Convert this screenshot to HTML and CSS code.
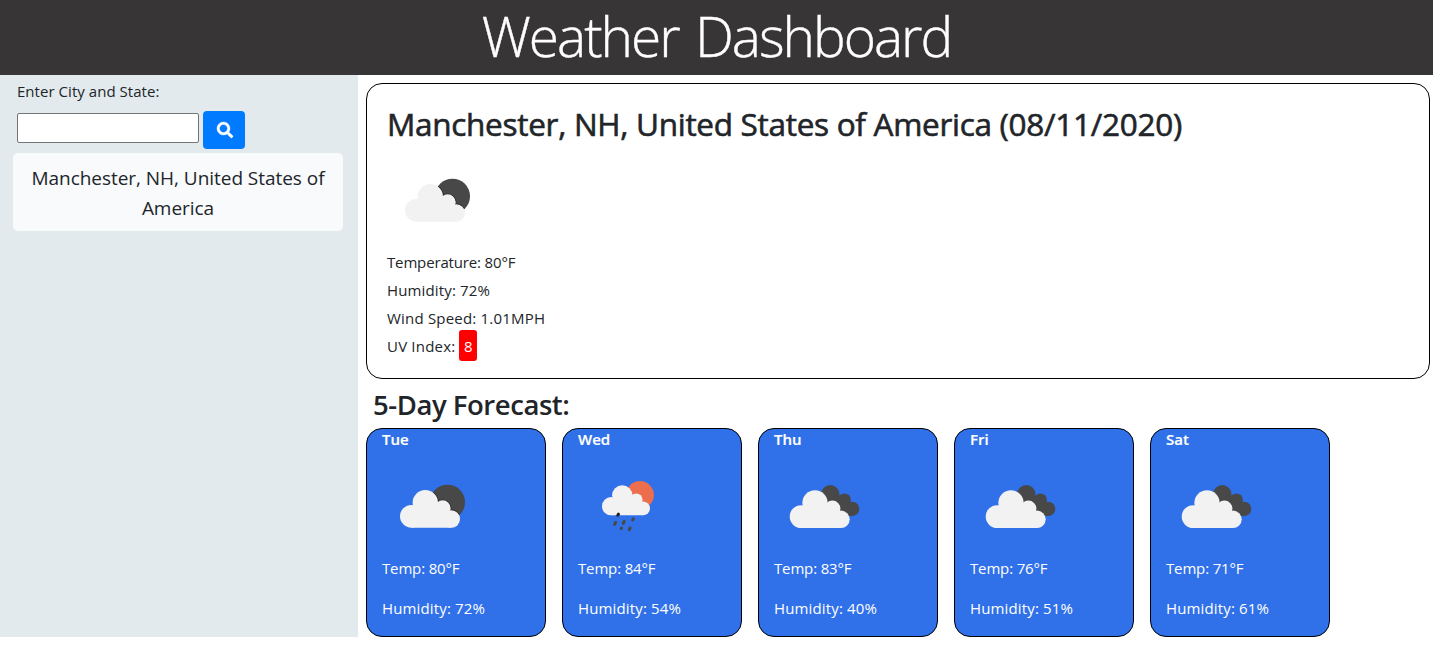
FILE: index.html
```html
<!DOCTYPE html>
<html lang="en">
<head>
<meta charset="utf-8">
<title>Weather Dashboard</title>
<link rel="stylesheet" href="styles.css">
</head>
<body>
<svg class="defs" width="0" height="0" aria-hidden="true">
  <defs>
    <g id="cloud">
      <circle cx="43.3" cy="46.7" r="12.7"/>
      <circle cx="29.4" cy="60.3" r="11.4"/>
      <circle cx="60.7" cy="52.3" r="8"/>
      <circle cx="69.3" cy="63" r="8.7"/>
      <path d="M29.4 71.7H69.3V60L60 50L45 42L29 55Z"/>
    </g>
    <clipPath id="moon"><circle cx="65.5" cy="46.2" r="17.5"/></clipPath>
    <g id="broken">
      <circle cx="65.5" cy="46.2" r="17.5" fill="#484848"/>
      <g clip-path="url(#moon)"><use href="#cloud" stroke="#262626" stroke-width="1.4"/></g>
      <use href="#cloud" fill="#f2f2f2"/>
    </g>
    <g id="overcast">
      <g fill="#484848">
        <circle cx="56.3" cy="38.3" r="9.2"/>
        <circle cx="70.5" cy="43.9" r="6.4"/>
        <circle cx="78.1" cy="52.9" r="7.2"/>
        <path d="M56 36L72 43L78 60H58Z"/>
      </g>
      <use href="#cloud" x="-2.3" y=".3" fill="#f2f2f2"/>
    </g>
    <g id="rain">
      <circle cx="62" cy="39" r="13.9" fill="#ec6e4c"/>
      <use href="#cloud" transform="translate(9.6 2) scale(.8)" fill="#f2f2f2"/>
      <g stroke="#484848" stroke-width="3" stroke-linecap="round">
        <path d="M40.5 58.2L39.8 59.2" stroke="#222"/>
        <path d="M37.6 66.3L36.6 68.3M46.2 65.3L45.2 67.3M55.3 62.9L54.7 63.9M43.5 72L43.1 72.6M52.1 71.8L51.3 73.6"/>
      </g>
    </g>
  </defs>
</svg>
<header class="header"><h1>Weather Dashboard</h1></header>
<div class="layout">
  <aside class="sidebar">
    <label class="label" for="city">Enter City and State:</label>
    <div class="search">
      <input class="input" id="city" type="text">
      <button class="button" aria-label="Search"><svg width="16" height="16" viewBox="0 0 512 512"><path fill="#fff" stroke="#fff" stroke-width="12" d="M505 442.700L405.300 343c-4.500-4.500-10.600-7-17-7H372c27.600-35.300 44-79.700 44-128C416 93.100 322.900 0 208 0S0 93.100 0 208s93.100 208 208 208c48.300 0 92.700-16.400 128-44v16.300c0 6.400 2.500 12.500 7 17l99.700 99.700c9.400 9.400 24.600 9.400 33.900 0l28.300-28.300c9.400-9.400 9.400-24.600.1-34zM208 336c-70.700 0-128-57.200-128-128 0-70.700 57.200-128 128-128 70.700 0 128 57.200 128 128 0 70.700-57.200 128-128 128z"/></svg></button>
    </div>
    <button class="history">Manchester, NH, United States of<br>America</button>
  </aside>
  <main class="main">
    <section class="current">
      <h2>Manchester, NH, United States of America (08/11/2020)</h2>
      <svg class="icon" viewBox="0 0 100 100"><use href="#broken"/></svg>
      <p class="temperature">Temperature: 80°F</p>
      <p class="humidity">Humidity: 72%</p>
      <p class="wind">Wind Speed: 1.01MPH</p>
      <p class="wind">UV Index: <span class="uv">8</span></p>
    </section>
    <h3 class="forecast-title">5-Day Forecast:</h3>
    <section class="forecast">
      <article class="day"><h4>Tue</h4><svg class="icon" viewBox="0 0 100 100"><use href="#broken"/></svg><p class="temperature">Temp: 80°F</p><p class="humidity">Humidity: 72%</p></article>
      <article class="day"><h4>Wed</h4><svg class="icon" viewBox="0 0 100 100"><use href="#rain"/></svg><p class="temperature">Temp: 84°F</p><p class="humidity">Humidity: 54%</p></article>
      <article class="day"><h4>Thu</h4><svg class="icon" viewBox="0 0 100 100"><use href="#overcast"/></svg><p class="temperature">Temp: 83°F</p><p class="humidity">Humidity: 40%</p></article>
      <article class="day"><h4>Fri</h4><svg class="icon" viewBox="0 0 100 100"><use href="#overcast"/></svg><p class="temperature">Temp: 76°F</p><p class="humidity">Humidity: 51%</p></article>
      <article class="day"><h4>Sat</h4><svg class="icon" viewBox="0 0 100 100"><use href="#overcast"/></svg><p class="temperature">Temp: 71°F</p><p class="humidity">Humidity: 61%</p></article>
    </section>
  </main>
</div>
</body>
</html>
```
FILE: styles.css
```css
* { box-sizing: border-box; }
body, h1, h2, h3, h4, p { margin: 0; }
body { background: #fff; color: #212529; font: 400 15px/24px "Open Sans", "Noto Sans", sans-serif; white-space: nowrap; overflow: hidden; }
.defs { display: block; height: 0; }
.header { height: 75px; background: #383536; color: #fff; text-align: center; }
.header h1 { font-size: 55px; font-weight: 300; line-height: 72px; letter-spacing: -2px; word-spacing: 4px; -webkit-text-stroke: .4px #fff; }
.layout { display: flex; height: 562px; }
.sidebar { width: 358px; background: #e2eaed; padding: 4px 15px 0 13px; }
.label { display: block; margin-left: 4px; letter-spacing: .04px; }
.search { display: flex; gap: 4px; align-items: center; margin: 8px 0 4px 4px; height: 38px; }
.input { width: 182px; height: 30px; border: 1px solid #767676; border-radius: 2px; background: #fff; margin-bottom: 4px; }
.button { width: 42px; height: 38px; border: 0; border-radius: 4px; background: #007bff; display: flex; align-items: center; justify-content: center; padding: 0 0 0 1px; }
.button svg { overflow: visible; }
.history { display: block; width: 330px; height: 78px; border: 0; border-radius: 5px; background: #f8fafc; color: #212529; font: 400 19px/30px "Open Sans", sans-serif; letter-spacing: -.04px; padding: 2px 0 0; }
.main { flex: 1; padding: 8px 3px 0 8px; }
.current { height: 296px; border: 1px solid #000; border-radius: 16px; padding: 19px 20px; }
.current h2 { font-size: 31.5px; font-weight: 400; line-height: 41px; height: 43px; letter-spacing: -.29px; -webkit-text-stroke: .6px #212529; }
.icon { display: block; width: 100px; height: 100px; }
.current .icon { margin: 4px 0 -2px; }
.current p { line-height: 28px; height: 28px; }
.temperature { letter-spacing: -.15px; }
.humidity { letter-spacing: .15px; }
.wind { letter-spacing: .2px; }
.uv { display: inline-block; width: 18px; height: 31px; line-height: 32px; margin: -4px 0 0; text-align: center; border-radius: 3px; background: #f00; color: #fff; vertical-align: middle; }
.forecast-title { margin-left: 7px; height: 49px; font-size: 27.5px; font-weight: 600; line-height: 51px; letter-spacing: -.45px; }
.forecast { display: flex; gap: 16px; }
.day { width: 180px; height: 209px; padding: 0 15px; border: 1px solid #000; border-radius: 16px; background: #3071ea; color: #fff; }
.day h4 { font-size: 15px; font-weight: 600; line-height: 20px; height: 27px; -webkit-text-stroke: .2px #fff; }
.day p { line-height: 24px; margin-bottom: 16px; }
```
